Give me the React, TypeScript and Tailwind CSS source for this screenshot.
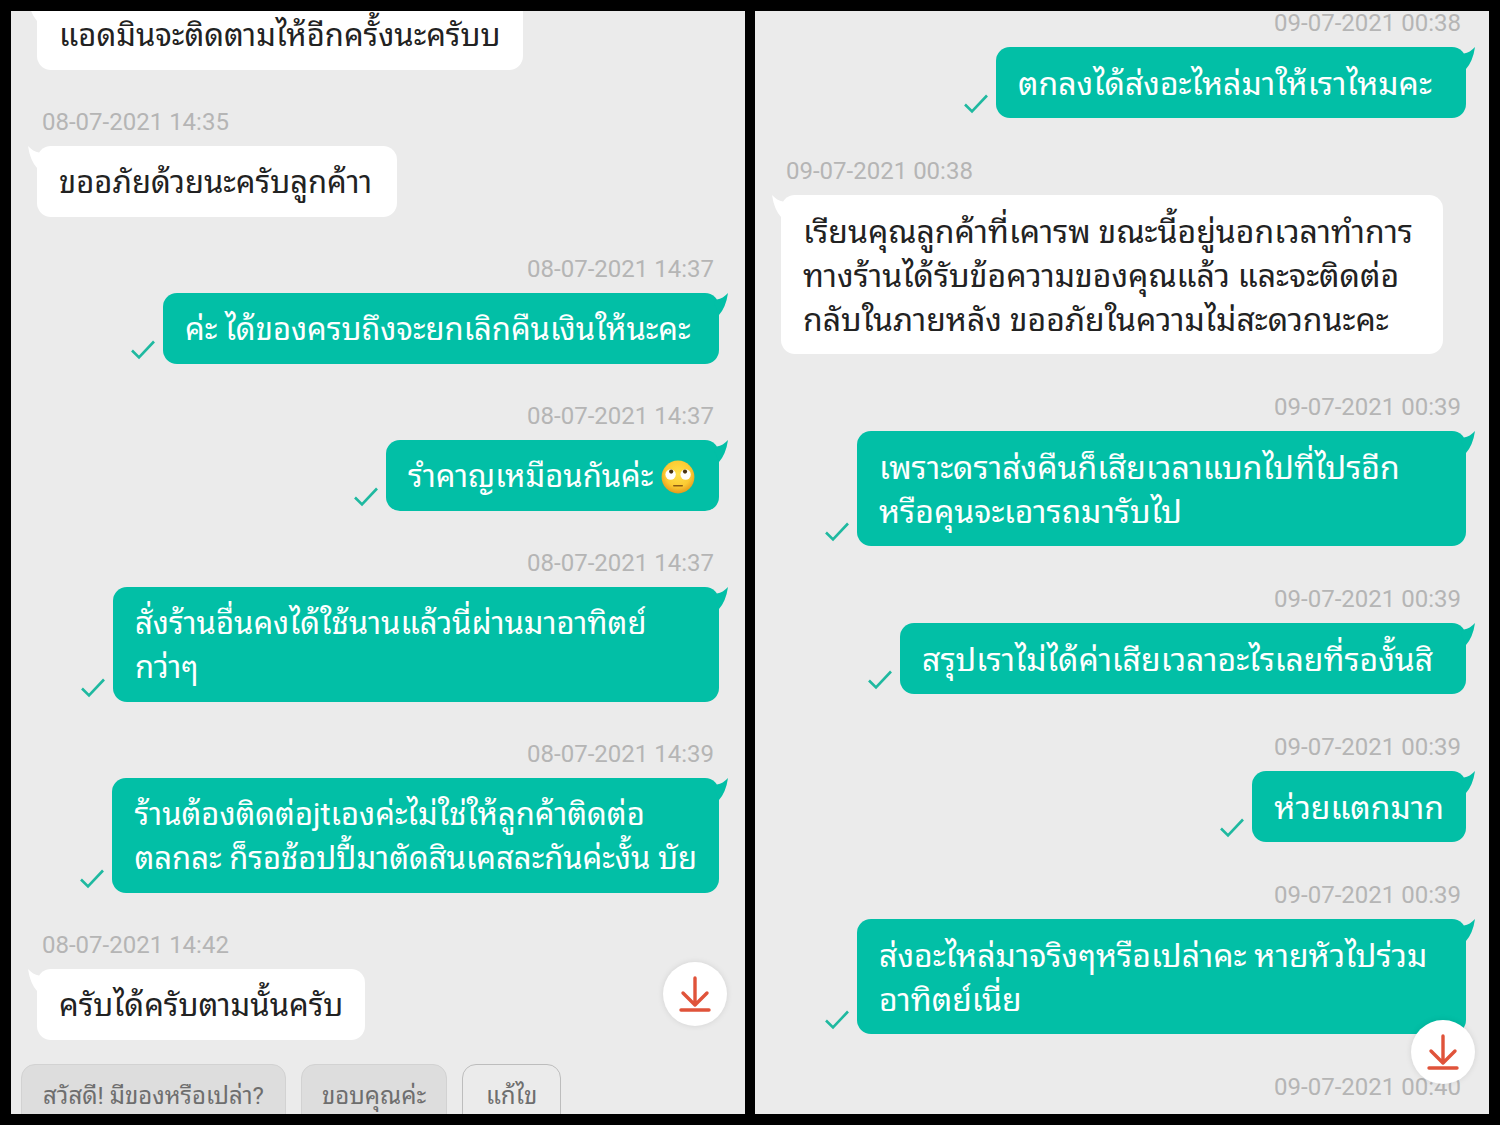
import clsx from 'clsx'
import type { ReactNode } from 'react'

type Message = {
  id: number
  mine?: boolean
  time?: string
  lines?: ReactNode[]
  width?: string
}

// eye-roll emoji
const RollingEyes = () => (
  <svg role="img" aria-label="🙄" viewBox="0 0 34 36" className="mr-0.5 mb-1 inline-block h-9 w-[34px]">
    <defs>
      <radialGradient id="face" cx="50%" cy="40%" r="60%">
        <stop offset="0" stopColor="#ffe14a" />
        <stop offset="0.65" stopColor="#fccb33" />
        <stop offset="1" stopColor="#e59a1c" />
      </radialGradient>
    </defs>
    <circle cx="17" cy="18" r="16.4" fill="url(#face)" />
    <circle cx="9.6" cy="15.5" r="5.2" fill="#fff" />
    <circle cx="24.6" cy="15.5" r="5.2" fill="#fff" />
    <circle cx="10.2" cy="12.6" r="2.1" fill="#4a3312" />
    <circle cx="24" cy="12.6" r="2.1" fill="#4a3312" />
    <path d="M12.8 26.8h8.4" stroke="#8a5a14" strokeWidth="1.6" strokeLinecap="round" />
  </svg>
)

const leftMessages: Message[] = [
  { id: 1, lines: ['แอดมินจะติดตามไห้อีกครั้งนะครับบ'] },
  { id: 2, time: '08-07-2021 14:35', width: 'min-w-[360px]', lines: ['ขออภัยด้วยนะครับลูกค้าา'] },
  { id: 3, mine: true, time: '08-07-2021 14:37', width: 'min-w-[556px]', lines: ['ค่ะ ได้ของครบถึงจะยกเลิกคืนเงินให้นะคะ'] },
  { id: 4, mine: true, time: '08-07-2021 14:37', lines: [<>รำคาญเหมือนกันค่ะ <RollingEyes /></>] },
  { id: 5, mine: true, time: '08-07-2021 14:37', width: 'min-w-[606px]', lines: ['สั่งร้านอื่นคงได้ใช้นานแล้วนี่ผ่านมาอาทิตย์', 'กว่าๆ'] },
  { id: 6, mine: true, time: '08-07-2021 14:39', width: 'min-w-[606px]', lines: ['ร้านต้องติดต่อjtเองค่ะไม่ใช่ให้ลูกค้าติดต่อ', 'ตลกละ ก็รอช้อปปี้มาตัดสินเคสละกันค่ะงั้น บัย'] },
  { id: 7, time: '08-07-2021 14:42', lines: ['ครับได้ครับตามนั้นครับ'] },
]

const rightMessages: Message[] = [
  { id: 8, mine: true, time: '09-07-2021 00:38', width: 'min-w-[470px]', lines: ['ตกลงได้ส่งอะไหล่มาให้เราไหมคะ'] },
  { id: 9, time: '09-07-2021 00:38', width: 'min-w-[662px]', lines: ['เรียนคุณลูกค้าที่เคารพ ขณะนี้อยู่นอกเวลาทำการ', 'ทางร้านได้รับข้อความของคุณแล้ว และจะติดต่อ', 'กลับในภายหลัง ขออภัยในความไม่สะดวกนะคะ'] },
  { id: 10, mine: true, time: '09-07-2021 00:39', width: 'min-w-[609px]', lines: ['เพราะดราส่งคืนก็เสียเวลาแบกไปที่ไปรอีก', 'หรือคุนจะเอารถมารับไป'] },
  { id: 11, mine: true, time: '09-07-2021 00:39', width: 'min-w-[566px]', lines: ['สรุปเราไม่ได้ค่าเสียเวลาอะไรเลยที่รองั้นสิ'] },
  { id: 12, mine: true, time: '09-07-2021 00:39', lines: ['ห่วยแตกมาก'] },
  { id: 13, mine: true, time: '09-07-2021 00:39', width: 'min-w-[609px]', lines: ['ส่งอะไหล่มาจริงๆหรือเปล่าคะ หายหัวไปร่วม', 'อาทิตย์เนี่ย'] },
  { id: 14, mine: true, time: '09-07-2021 00:40' },
]

function Tail({ mine }: { mine?: boolean }) {
  return (
    <svg
      viewBox="0 0 20 24"
      className={clsx('absolute top-0 h-6 w-5', mine ? '-right-[9px] text-[#02bfa6]' : '-left-[9px] -scale-x-100 text-white')}
    >
      <path d="M20 0 Q15 5.5 9 6.5 L6 10 L11 22 Q18 14 20 0 Z" fill="currentColor" />
    </svg>
  )
}

function Bubble({ message }: { message: Message }) {
  const { mine, time, lines, width } = message
  return (
    <li className={clsx('flex flex-col', mine ? 'items-end' : 'items-start')}>
      {time && <time className="mx-[5px] mb-3 text-2xl leading-6 text-[#b5b5b5]">{time}</time>}
      {lines && (
        <div className="flex items-end gap-2">
          {mine && (
            <svg viewBox="0 0 24 20" className="mb-1 h-5 w-6" fill="none" stroke="#1fb9a0" strokeWidth="2.6">
              <path d="M1 10.5 L8 17.5 L23 1.5" />
            </svg>
          )}
          <div
            className={clsx(
              'relative rounded-[14px] px-[22px] pt-[15px] pb-3 leading-[44px] whitespace-nowrap',
              mine ? 'bg-[#02bfa6] text-white' : 'bg-white text-[#222]',
              width
            )}
          >
            <Tail mine={mine} />
            {lines.map((line, i) => (
              <p key={i}>{line}</p>
            ))}
          </div>
        </div>
      )}
    </li>
  )
}

function ScrollDown({ className }: { className: string }) {
  return (
    <button
      aria-label="เลื่อนลง"
      className={clsx('absolute flex size-16 items-center justify-center rounded-full bg-white shadow-[0_0_6px_rgba(0,0,0,0.1)]', className)}
    >
      <svg viewBox="0 0 32 38" className="h-[38px] w-8" fill="none" stroke="#e0533a" strokeWidth="3.4" strokeLinecap="round" strokeLinejoin="round">
        <path d="M16 3v27M4 18l12 12 12-12M2 35h28" />
      </svg>
    </button>
  )
}

export default function App() {
  return (
    <main className="grid h-screen grid-cols-2 gap-[10px] overflow-hidden bg-black p-[11px] font-[Roboto,'Droid_Sans_Thai','Noto_Sans_Thai_Looped',Loma,Waree,Garuda,'Noto_Sans',sans-serif]">
      <section className="relative overflow-hidden bg-[#ebebeb]">
        <ul className="-mt-3 flex flex-col gap-10 px-[26px] text-[31px]">
          {leftMessages.map(m => <Bubble key={m.id} message={m} />)}
        </ul>
        <div className="mt-6 flex gap-[15px] px-[10px] text-2xl text-[#6e6e6e]">
          <button className="h-16 min-w-[265px] rounded-[14px] border border-[#d2d2d2] bg-[#dddddd] px-5 whitespace-nowrap">สวัสดี! มีของหรือเปล่า?</button>
          <button className="h-16 min-w-[146px] rounded-[14px] border border-[#d2d2d2] bg-[#dddddd] px-5 whitespace-nowrap">ขอบคุณค่ะ</button>
          <button className="h-16 min-w-[99px] rounded-[14px] border border-[#bdbdbd] px-5 whitespace-nowrap">แก้ไข</button>
        </div>
        <ScrollDown className="right-[18px] bottom-[88px]" />
      </section>

      <section className="relative overflow-hidden bg-[#ebebeb]">
        <ul className="flex flex-col gap-[41px] pr-[23px] pl-[26px] text-[32px]">
          {rightMessages.map(m => <Bubble key={m.id} message={m} />)}
        </ul>
        <ScrollDown className="right-[14px] bottom-[30px]" />
      </section>
    </main>
  )
}
